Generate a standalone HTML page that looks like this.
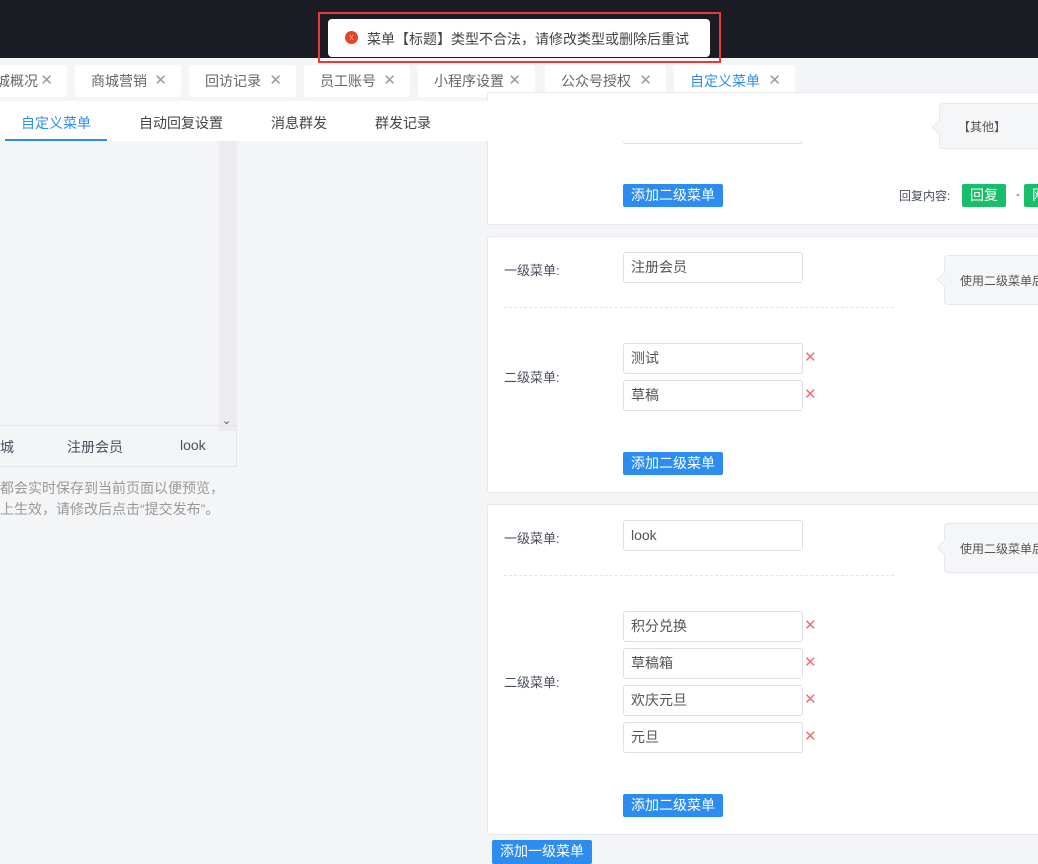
<!DOCTYPE html><html><head><meta charset="utf-8"><style>
*{margin:0;padding:0;box-sizing:border-box}
body{width:1038px;height:861px;overflow:hidden;background:#f4f5f7;font-family:"Liberation Sans","Noto Sans CJK SC",sans-serif;font-size:14px;color:#4a4f5c;position:relative}
.a{position:absolute}
.tab{position:absolute;top:65px;height:32px;background:#fff;border-radius:3px;line-height:32px;padding-left:16px;font-size:14px;color:#666}
.tab i{font-style:normal;color:#999;position:absolute;right:14px;font-size:15px}
.card{position:absolute;left:487px;width:560px;background:#fff;border:1px solid #e6e8eb;border-radius:3px}
.inp{position:absolute;left:623px;width:180px;height:31px;border:1px solid #dcdfe6;border-radius:3px;background:#fff;line-height:29px;padding-left:7px;color:#555}
.x{position:absolute;left:804px;color:#f56c6c;font-size:15px}
.btn{position:absolute;height:23px;background:#2d8cf0;color:#fff;border-radius:2px;line-height:23px;text-align:center;font-size:14px}
.lbl{position:absolute;left:504px;font-size:13px;color:#4a4f5c}
.dash{position:absolute;left:504px;width:390px;border-top:1px dashed #e3e5e8}
.tip{position:absolute;background:#f5f6f7;border:1px solid #e6e8eb;border-radius:4px;font-size:12px;color:#555;width:120px}
.tip:before{content:"";position:absolute;left:-6px;top:18px;width:10px;height:10px;background:#f5f6f7;border-left:1px solid #e6e8eb;border-bottom:1px solid #e6e8eb;transform:rotate(45deg)}
</style></head><body>
<div class="a" style="left:0;top:0;width:1038px;height:58px;background:#1b1c24"></div>
<div class="a" style="left:318px;top:12px;width:403px;height:51px;border:2px solid #e83a3a"></div>
<div class="a" style="left:328px;top:19px;width:382px;height:38px;background:#fff;border-radius:4px"></div>
<div class="a" style="left:345px;top:31px;width:13px;height:13px;border-radius:50%;background:#e8431f;color:#fbb;font-size:9px;line-height:13px;text-align:center">x</div>
<div class="a" style="left:367px;top:29px;font-size:14px;color:#444">菜单【标题】类型不合法，请修改类型或删除后重试</div>

<div class="tab" style="left:-20px;width:87px">城概况<i>✕</i></div>
<div class="tab" style="left:75px;width:106px">商城营销<i>✕</i></div>
<div class="tab" style="left:189px;width:107px">回访记录<i>✕</i></div>
<div class="tab" style="left:304px;width:106px">员工账号<i>✕</i></div>
<div class="tab" style="left:418px;width:117px">小程序设置<i>✕</i></div>
<div class="tab" style="left:545px;width:121px">公众号授权<i>✕</i></div>
<div class="tab" style="left:674px;width:121px;color:#2d8cf0">自定义菜单<i>✕</i></div>

<div class="card" style="top:92px;height:133px"></div>
<div class="inp" style="top:112px;height:32px"></div>
<div class="tip" style="left:939px;top:103px;height:46px;padding:14px 0 0 18px">【其他】</div>
<div class="btn" style="left:623px;top:184px;width:100px">添加二级菜单</div>
<div class="a" style="left:899px;top:187px;font-size:12px">回复内容:</div>
<div class="btn" style="left:962px;top:184px;width:44px;background:#19be6b">回复</div>
<div class="a" style="left:1016px;top:187px;font-size:12px">-</div>
<div class="btn" style="left:1024px;top:184px;width:30px;background:#19be6b">网</div>

<div class="a" style="left:0;top:101px;width:910px;height:40px;background:#fff"></div>
<div class="a" style="left:21px;top:113px;color:#2d8cf0">自定义菜单</div>
<div class="a" style="left:5px;top:139px;width:102px;height:2px;background:#2d8cf0"></div>
<div class="a" style="left:139px;top:113px;color:#444">自动回复设置</div>
<div class="a" style="left:271px;top:113px;color:#444">消息群发</div>
<div class="a" style="left:375px;top:113px;color:#444">群发记录</div>

<div class="a" style="left:0;top:141px;width:237px;height:326px;background:#f4f5f7;border-right:1px solid #e3e5e8;border-bottom:1px solid #e3e5e8"></div>
<div class="a" style="left:219px;top:141px;width:18px;height:290px;background:#ececee"></div>
<div class="a" style="left:222px;top:414px;font-size:11px;color:#555">⌄</div>
<div class="a" style="left:0;top:425px;width:237px;border-top:1px solid #e3e5e8"></div>
<div class="a" style="left:0;top:437px;color:#4a4f5c">城</div>
<div class="a" style="left:67px;top:437px;color:#4a4f5c">注册会员</div>
<div class="a" style="left:180px;top:437px;color:#4a4f5c">look</div>
<div class="a" style="left:0;top:478px;font-size:14px;color:#999;line-height:21px">都会实时保存到当前页面以便预览，<br>上生效，请修改后点击“提交发布”。</div>

<div class="card" style="top:236px;height:257px"></div>
<div class="lbl" style="top:260px">一级菜单:</div>
<div class="inp" style="top:252px">注册会员</div>
<div class="tip" style="left:944px;top:255px;height:50px;padding:16px 0 0 15px">使用二级菜单后</div>
<div class="dash" style="top:307px"></div>
<div class="lbl" style="top:367px">二级菜单:</div>
<div class="inp" style="top:343px">测试</div><div class="x" style="top:348px">✕</div>
<div class="inp" style="top:380px">草稿</div><div class="x" style="top:385px">✕</div>
<div class="btn" style="left:623px;top:452px;width:100px">添加二级菜单</div>

<div class="card" style="top:504px;height:331px"></div>
<div class="lbl" style="top:528px">一级菜单:</div>
<div class="inp" style="top:520px">look</div>
<div class="tip" style="left:944px;top:523px;height:50px;padding:16px 0 0 15px">使用二级菜单后</div>
<div class="dash" style="top:575px"></div>
<div class="lbl" style="top:672px">二级菜单:</div>
<div class="inp" style="top:611px">积分兑换</div><div class="x" style="top:616px">✕</div>
<div class="inp" style="top:648px">草稿箱</div><div class="x" style="top:653px">✕</div>
<div class="inp" style="top:685px">欢庆元旦</div><div class="x" style="top:690px">✕</div>
<div class="inp" style="top:722px">元旦</div><div class="x" style="top:727px">✕</div>
<div class="btn" style="left:623px;top:794px;width:100px">添加二级菜单</div>
<div class="btn" style="left:492px;top:840px;width:100px;height:24px">添加一级菜单</div>
</body></html>
